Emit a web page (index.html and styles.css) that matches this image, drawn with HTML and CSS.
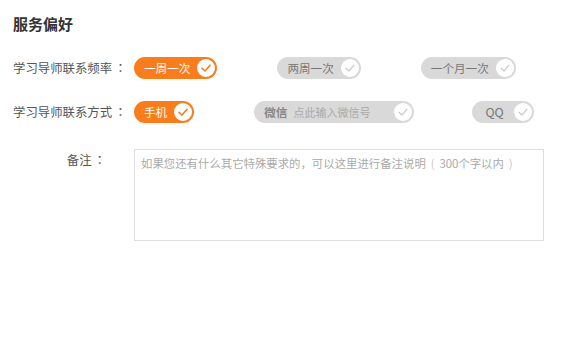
FILE: index.html
```html
<!DOCTYPE html>
<html lang="zh-CN">
<head>
  <meta charset="UTF-8">
  <title>服务偏好</title>
  <link rel="stylesheet" href="styles.css">
</head>
<body>

  <div class="pref-box">
    <h3 class="pref-title">服务偏好</h3>

    <div class="pref-row">
      <span class="pref-label">学习导师联系频率<span class="colon" lang="zh-TW">：</span></span>
      <div class="pill-group">
        <span class="pill on">一周一次<i class="tick"><svg viewBox="0 0 18 18"><path d="M5 9.3 L8 12 L13 6.2"/></svg></i></span>
        <span class="pill">两周一次<i class="tick"><svg viewBox="0 0 18 18"><path d="M5 9.3 L8 12 L13 6.2"/></svg></i></span>
        <span class="pill">一个月一次<i class="tick"><svg viewBox="0 0 18 18"><path d="M5 9.3 L8 12 L13 6.2"/></svg></i></span>
      </div>
    </div>

    <div class="pref-row">
      <span class="pref-label">学习导师联系方式<span class="colon" lang="zh-TW">：</span></span>
      <div class="pill-group">
        <span class="pill on">手机<i class="tick"><svg viewBox="0 0 18 18"><path d="M5 9.3 L8 12 L13 6.2"/></svg></i></span>
        <span class="pill pill-wx"><b>微信</b><span class="wx-input">点此输入微信号</span><i class="tick"><svg viewBox="0 0 18 18"><path d="M5 9.3 L8 12 L13 6.2"/></svg></i></span>
        <span class="pill pill-qq">QQ<i class="tick"><svg viewBox="0 0 18 18"><path d="M5 9.3 L8 12 L13 6.2"/></svg></i></span>
      </div>
    </div>

    <div class="note-row">
      <span class="note-label">备注<span class="colon" lang="zh-TW">：</span></span>
      <div class="note-box">如果您还有什么其它特殊要求的，可以这里进行备注说明<span class="paren">(</span>300个字以内<span class="paren">)</span></div>
    </div>
  </div>

</body>
</html>
```

FILE: styles.css
```css
body {
  margin: 0;
  background-color: #fff;
  font-family: "Noto Sans CJK SC", "Liberation Sans", sans-serif;
  color: #555;
}

/* 全角标点居中 */
[lang="zh-TW"] {
  font-family: "Noto Sans CJK TC", "Noto Sans CJK SC", sans-serif;
}

.colon {
  padding-left: 2px;
}

.paren {
  margin: 0 5px;
  font-weight: 300;
}

.pref-box {
  padding: 14px 13px;
}

.pref-title {
  margin: 0 0 23px;
  font-size: 15px;
  line-height: 20px;
  font-weight: bold;
  color: #333;
}

.pref-row {
  display: flex;
  align-items: center;
  height: 22px;
  margin-bottom: 22px;
}

.pref-label {
  width: 121px;
  font-size: 12.4px;
  line-height: 22px;
  color: #555;
  white-space: nowrap;
}

.pill-group {
  display: flex;
  gap: 60px;
}

.pill {
  display: flex;
  align-items: center;
  height: 22px;
  padding: 0 2px 0 10px;
  border-radius: 11px;
  background-color: #d9d9d9;
  color: #777;
  font-size: 11.6px;
  line-height: 22px;
  white-space: nowrap;
}

.pill.on {
  background-color: #fa7d1d;
  color: #fff;
}

.tick {
  display: block;
  width: 18px;
  height: 18px;
  margin-left: 7px;
  border-radius: 50%;
  background-color: #fff;
}

.tick svg {
  display: block;
  width: 18px;
  height: 18px;
  fill: none;
  stroke: #ccc;
  stroke-width: 1.3;
  stroke-linecap: round;
  stroke-linejoin: round;
}

.pill.on .tick svg {
  stroke: #fa7d1d;
  stroke-width: 1.6;
}

.pill-wx b {
  color: #888;
  font-weight: bold;
}

.wx-input {
  width: 94px;
  margin-left: 6px;
  font-size: 11px;
  color: #aaa;
}

.pill-qq {
  margin-left: -2px;
  padding-left: 13px;
  font-size: 12.4px;
}

.pill-qq .tick {
  margin-left: 10px;
}

.note-row {
  display: flex;
  margin-top: 26px;
}

.note-label {
  width: 93px;
  margin-right: 28px;
  text-align: right;
  font-size: 12.4px;
  line-height: 22px;
  color: #555;
}

.note-box {
  box-sizing: border-box;
  width: 410px;
  height: 92px;
  padding: 4px 6px;
  border: 1px solid #ddd;
  font-size: 11.4px;
  line-height: 18px;
  color: #aaa;
}
```
